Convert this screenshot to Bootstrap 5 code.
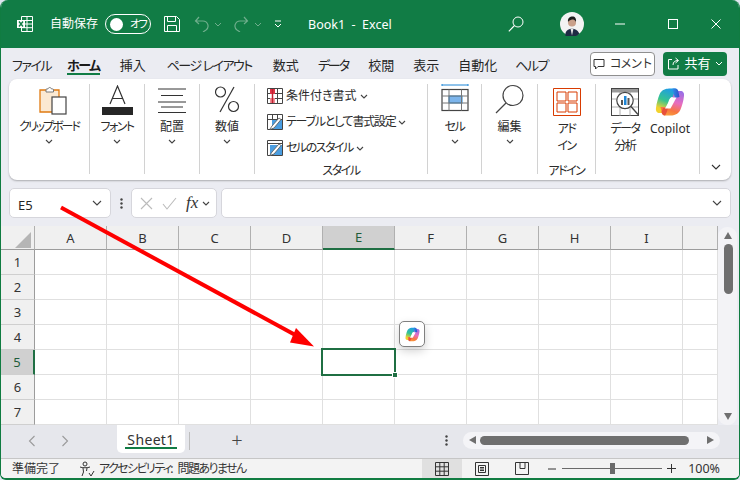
<!DOCTYPE html>
<html lang="ja">
<head>
<meta charset="utf-8">
<title>Book1 - Excel</title>
<link href="https://cdn.jsdelivr.net/npm/bootstrap@5.3.0/dist/css/bootstrap.min.css" rel="stylesheet">
<style>
html,body{margin:0;width:740px;height:480px;overflow:hidden;background:#dfe6f0}
body{font-family:"Noto Sans","Noto Sans CJK JP",sans-serif;font-size:12px;color:#262626;font-feature-settings:"palt";line-height:14px}
.kn{letter-spacing:-1.5px}
.kn2{letter-spacing:-2px}
.kn3{letter-spacing:-1.25px}
.xl-win{width:740px;height:480px;background:#ebecf2;border-radius:8px 8px 6px 6px;overflow:hidden;position:relative;border-left:1px solid #107c41;border-right:1px solid #107c41;border-bottom:2px solid #107c41}
.xl-title{height:48px;background:#117c45;color:#fff;margin:0 -1px}
.xl-title svg{display:block;flex:none}
.t-auto{width:55px}
.t-toggle{width:46px;height:20px;border:1.3px solid #fff;border-radius:10px;margin-right:13px;padding:0 3px 0 3px;font-size:11px;white-space:nowrap}
.t-knob{width:13px;height:13px;border-radius:50%;background:#fff;margin-right:7px;margin-left:1px;flex:none}
.t-name{font-size:12.5px;width:200px;flex:none;white-space:pre;padding-top:2px}
.xl-tabs{height:31px;padding-left:11px;font-size:13px}
.xl-tab{margin-right:19px;padding-top:4px;position:relative;height:25px;line-height:20px;white-space:pre;flex:none}
.xl-tab-on{font-weight:700;color:#1b1b1b}
.xl-tab-on::after{content:"";position:absolute;left:0;right:0;bottom:1px;height:2px;background:#117c45}
.gap16{margin-right:16px}
.gap18{margin-right:18px}
.gap20{margin-right:20px}
.gap21{margin-right:21px}
.btn-cmt,.btn-share{height:24px;border-radius:4px;font-size:12px;padding:0;display:flex;align-items:center;justify-content:center;flex:none;white-space:nowrap}
.btn-cmt{width:65px;background:#fff;border:1px solid #8f8f8f;color:#333;margin-right:8px}
.btn-share{width:64px;background:#117c45;border:0;color:#fff;font-size:13px;margin-right:12px}
.xl-ribbon{height:101px;margin:0 8px 8px;background:#fff;border-radius:8px;box-shadow:0 1px 2px rgba(0,0,0,.28);padding-top:5px}
.grp{height:90px;border-right:1px solid #d2d2d2;text-align:center;flex:none;color:#2b2b2b}
.grp svg{display:block;margin:0 auto}
.g-ic{height:36px;display:flow-root}
.g-lab{height:14px;line-height:14px;white-space:nowrap}
.g-two{height:34px;line-height:17px}
.grp .g-chev{margin-top:5px}
.g-foot{position:absolute;left:0;right:0;bottom:-4px;line-height:14px}
.sty-list{margin-top:-1px}
.sty-row{height:26px;padding-left:12px;white-space:nowrap}
.grp .sty-row svg{margin:0 3px 0 0}
.grp .sty-row .chv{margin:0 0 0 3px}
.col-data{width:58px}
.col-cop{width:40px;margin-left:-4px}
.xl-fbar{height:30px;margin:0 8px 8px}
.fbox{background:#fff;border:1px solid #d6d6dc;border-radius:5px;height:30px}
.e5-txt{padding-top:3px;font-size:13px}
.fx-txt{font-family:"Liberation Serif",serif;font-size:17px;font-weight:400;margin-left:9px;color:#333}
.xl-sheetwrap{height:199px;background:#fff}
.sheet{border-collapse:separate;border-spacing:0;table-layout:fixed;width:717px}
.sheet th,.sheet td{padding:0;font-weight:400;text-align:center;font-size:13px;color:#333}
.sheet thead th{height:24px;background:#f0f0f0;border-right:1px solid #b0b0b0;border-bottom:1px solid #9c9c9c}
.sheet thead th.on{background:#d0d0d0;border-bottom:2px solid #1f6f43;color:#1f5c3a}
.sheet tbody th{height:25px;background:#f0f0f0;border-right:1px solid #9c9c9c;border-bottom:1px solid #cfcfcf}
.sheet tbody th.on{background:#d0d0d0;border-right:2px solid #1f6f43;color:#1f5c3a}
.sheet td{height:25px;border-right:1px solid #e0e0e0;border-bottom:1px solid #e0e0e0;position:relative}
.sel-box{position:absolute;left:-2px;top:-2px;width:75px;height:28px;border:2px solid #1f6f43;z-index:2}
.sel-box::after{content:"";position:absolute;right:-4px;bottom:-4px;width:6px;height:6px;background:#1f6f43;border:1px solid #fff}
.vscroll{width:22px;background:#ebecf2;padding-top:1px}
.vtrack{width:19px;height:198px;background:#f3f3f6;border-radius:9px;position:relative}
.vthumb{position:absolute;left:6px;top:17px;width:9px;height:50px;background:#6f6f6f;border-radius:5px}
.tri-u,.tri-d{position:absolute;left:6px;width:0;height:0;border-left:4.5px solid transparent;border-right:4.5px solid transparent}
.tri-u{top:5px;border-bottom:7px solid #6f6f6f}
.tri-d{bottom:5px;border-top:7px solid #6f6f6f}
.xl-sbar{height:33px;background:#e6e7ec;position:relative}
.s-tab{margin-left:48px;margin-right:4px;width:68px;height:28px;background:#fff;border-radius:0 0 5px 5px;font-size:14px;text-align:center;position:relative;line-height:29px;letter-spacing:.35px;color:#333;flex:none}
.s-tab::after{content:"";position:absolute;left:8px;right:8px;bottom:4px;height:2px;background:#117c45}
.s-sep{width:1px;height:18px;background:#bdbdbd;margin-top:7px}
.s-plus{font-size:20px;margin-left:37px;margin-top:5px;line-height:20px;color:#444;width:20px;text-align:center;font-weight:300}
.hs-track{width:257px;height:17px;background:#f4f4f7;border-radius:9px;margin-right:19px;margin-top:7px;position:relative}
.hs-thumb{position:absolute;left:17px;top:4px;width:209px;height:9px;border-radius:5px;background:#6f6f6f}
.tri-l,.tri-r{position:absolute;top:4px;width:0;height:0;border-top:4.5px solid transparent;border-bottom:4.5px solid transparent}
.tri-l{left:6px;border-right:7px solid #6f6f6f}
.tri-r{right:6px;border-left:7px solid #6f6f6f}
.xl-status{height:20px;background:#f3f3f3;border-top:1px solid #c6c6c6;font-size:12px;padding-left:11px;color:#333;white-space:nowrap}
.acc-txt{letter-spacing:-1.6px;word-spacing:4px}
.v-btn{width:40px;height:19px}
.v-on{background:#e0e0e0}
.z-line{width:100px;height:1px;background:#6a6a6a;position:relative;margin:0 5px 0 6px}
.z-knob{position:absolute;left:48px;top:-5px;width:5px;height:11px;background:#6a6a6a}
.z-pct{margin:0 19px 0 12px;font-size:12.5px}
.arrow-ov{position:absolute;left:0;top:0;z-index:5;pointer-events:none}
.cp-float{position:absolute;left:398px;top:321px;width:26px;height:26px;background:#fff;border:1px solid #808080;border-radius:5px;box-shadow:0 4px 10px rgba(0,0,0,.18);z-index:4}
</style>
</head>
<body>
<svg width="0" height="0" class="position-absolute">
<defs>
<linearGradient id="cg1" x1=".6" y1="0" x2=".2" y2="1"><stop offset="0" stop-color="#1e9be8"/><stop offset=".5" stop-color="#35c490"/><stop offset=".85" stop-color="#f2d22e"/></linearGradient>
<linearGradient id="cg2" x1=".7" y1="0" x2=".4" y2="1"><stop offset="0" stop-color="#9a6fe6"/><stop offset=".45" stop-color="#e86cc0"/><stop offset=".8" stop-color="#f8763f"/><stop offset="1" stop-color="#f99a3c"/></linearGradient>
<linearGradient id="cg3" x1="0" y1="0" x2="1" y2="0"><stop offset="0" stop-color="#2f8fe8"/><stop offset="1" stop-color="#2f4fc8"/></linearGradient>
<symbol id="copilot" viewBox="0 0 30 30">
<path d="M9.500 2.500C11 1.500 13 1.500 20 1.500 22 1.500 23 3 23.500 5L24.500 10H18C16 10 15 11 14 13L12 21C11 24.500 9 26 6.500 26H4.500C2 26 .5 24 1 21 1.500 16 3 11.500 4.500 7.500 5.500 5 7 3.500 9.500 2.500z" fill="url(#cg1)"/>
<path d="M20.500 27.500C19 28.500 17 28.500 10 28.500 8 28.500 7 27 6.500 25L5.500 20H12C14 20 15 19 16 17L18 9C19 5.500 21 4 23.500 4H25.500C28 4 29.500 6 29 9 28.500 14 27 18.500 25.500 22.500 24.500 25 23 26.500 20.500 27.500z" fill="url(#cg2)"/>
<path d="M17.500 1.500h2.500C22 1.500 23 3 23.500 5L24.500 10 20 11 18 4C17.700 2.800 17.500 2 17.500 1.500z" fill="url(#cg3)"/>
<path d="M8 21h5l-1 3.500C11.500 26 11 27 10 28.500 8 28.500 7 27 6.500 25z" fill="#e8503a"/>
<path d="M16 10.500h5.500L15.500 21.500H10z" fill="#fff"/>
</symbol>
<symbol id="chev" viewBox="0 0 8 5"><path d="M1 1l3 3 3-3" fill="none" stroke="#444" stroke-width="1.100"/></symbol>
</defs>
</svg>
<div class="xl-win d-flex flex-column">
  <!-- title bar -->
  <div class="xl-title d-flex align-items-center">
    <svg class="ms-3" width="18" height="18" viewBox="0 0 18 18"><path d="M5.500 1.500h11v15h-11zM11 1.500v15M5.500 5.500h11M5.500 9h11M5.500 12.700h11" fill="none" stroke="#fff" stroke-width="1"/><rect x="1" y="5" width="8" height="8" fill="#fff"/><path d="M3 6.500l4 5M7 6.500l-4 5" stroke="#117c45" stroke-width="1.400"/></svg>
    <div class="t-auto ms-3 flex-shrink-0">自動保存</div>
    <div class="t-toggle d-flex align-items-center flex-shrink-0"><span class="t-knob"></span><span class="kn">オフ</span></div>
    <svg width="16" height="16" viewBox="0 0 16 16"><path d="M.5 .5h12l3 3v12h-15zM3.500 .5v5h8v-5M3.500 15.500v-6h9v6" fill="none" stroke="#fff"/></svg>
    <svg width="16" height="16" viewBox="0 0 16 16" style="margin-left:14px"><path d="M5 1L1.500 5 5 8M1.500 5H9a5 5 0 0 1 3 9l-3 2" fill="none" stroke="#6fae8c" stroke-width="1.200"/></svg>
    <svg class="mx-1" width="8" height="5" viewBox="0 0 8 5"><path d="M1 1l3 3 3-3" fill="none" stroke="#6fae8c"/></svg>
    <svg width="18" height="16" viewBox="0 0 16 16" style="margin-left:6px"><path d="M11 1l3.500 4L11 8M14.500 5H7a5 5 0 0 0-3 9l3 2" fill="none" stroke="#6fae8c" stroke-width="1.200"/></svg>
    <svg class="mx-1" width="8" height="5" viewBox="0 0 8 5"><path d="M1 1l3 3 3-3" fill="none" stroke="#6fae8c"/></svg>
    <svg style="margin-left:8px" width="8" height="8" viewBox="0 0 8 8"><path d="M1 1h6M1 4l3 3 3-3" fill="none" stroke="#fff" stroke-width="1"/></svg>
    <div class="t-name" style="margin-left:26px">Book1  -  Excel</div>
    <svg width="16" height="16" viewBox="0 0 16 16"><circle cx="10" cy="6" r="5" fill="none" stroke="#fff"/><path d="M6.500 9.500L.8 15.300" stroke="#fff" stroke-width="1.100"/></svg>
    <svg style="margin-left:36px" width="24" height="24" viewBox="0 0 24 24"><circle cx="12" cy="12" r="12" fill="#f3f3f3"/><path d="M5.500 24a12 12 0 0 1 0-3c1-3 3.500-4 6.500-4.500 3 .5 5.500 1.500 7 4.500v1a12 12 0 0 1-13.500 2z" fill="#1e2a44"/><path d="M10.500 16.500l1.500 7 1.500-7z" fill="#e8e8e8"/><circle cx="12" cy="10.500" r="4" fill="#c9a08a"/><path d="M8 10c-.5-4 2-5.500 4.500-5.500S16.500 6.500 16 10c-1-2-2-2.500-4-2.500-2 .5-3 1-4 2.500z" fill="#1d1d1d"/></svg>
    <div class="d-flex align-items-center" style="margin-left:31px">
      <svg width="10" height="10" viewBox="0 0 10 10"><path d="M0 5h10" stroke="#fff"/></svg>
      <svg style="margin-left:43px" width="10" height="10" viewBox="0 0 10 10"><rect x=".5" y=".5" width="9" height="9" fill="none" stroke="#fff"/></svg>
      <svg style="margin-left:33px;margin-right:20px" width="10" height="10" viewBox="0 0 10 10"><path d="M.5 .5l9 9M9.500 .5l-9 9" stroke="#fff"/></svg>
    </div>
  </div>
  <!-- tabs -->
  <div class="xl-tabs d-flex align-items-center">
    <div class="xl-tab kn gap16">ファイル</div>
    <div class="xl-tab xl-tab-on kn gap20">ホーム</div>
    <div class="xl-tab gap21">挿入</div>
    <div class="xl-tab kn gap21">ページ レイアウト</div>
    <div class="xl-tab">数式</div>
    <div class="xl-tab kn2 gap20">データ</div>
    <div class="xl-tab">校閲</div>
    <div class="xl-tab">表示</div>
    <div class="xl-tab gap18">自動化</div>
    <div class="xl-tab kn">ヘルプ</div>
    <button class="btn btn-cmt ms-auto" type="button"><svg class="me-1" width="12" height="12" viewBox="0 0 12 12"><path d="M1 1.500h10v7H5L2.500 11V8.500H1z" fill="none" stroke="#333"/></svg><span class="kn">コメント</span></button>
    <button class="btn btn-share" type="button"><svg class="me-1" width="13" height="13" viewBox="0 0 13 13"><path d="M5 2.500H1.500v9.500h9.500V8M6 8c0-3 2-4.500 5-4.500M8.500 1L11.500 3.500 8.500 6" fill="none" stroke="#fff"/></svg>共有<svg class="ms-1" width="8" height="5" viewBox="0 0 8 5"><path d="M1 1l3 3 3-3" fill="none" stroke="#fff"/></svg></button>
  </div>
  <!-- ribbon -->
  <div class="xl-ribbon d-flex position-relative">
    <div class="grp" style="width:81px">
      <div class="g-ic"><svg width="28" height="29" viewBox="0 0 28 29" style="margin-left:30px;margin-top:2px"><path d="M1 4h19v22H1z" fill="#fbe9d2" stroke="#e07a10" stroke-width="1.300"/><path d="M7 4c0-1.500 1-1 2-1 .3-2 3-2 3.500 0 1 0 2-.5 2 1v2H7z" fill="#fff" stroke="#777"/><rect x="13" y="11" width="14" height="17" fill="#fff" stroke="#444" stroke-width="1.200"/></svg></div>
      <div class="g-lab kn2">クリップボード</div>
      <svg class="g-chev" width="8" height="5"><use href="#chev"/></svg>
    </div>
    <div class="grp" style="width:55px">
      <div class="g-ic"><svg width="33" height="31" viewBox="0 0 33 31" style="margin-top:1px"><path d="M9 19L16.500 1 24 19M11.500 13.500h10" fill="none" stroke="#333" stroke-width="1.200"/><rect x="1" y="22" width="31" height="8" fill="#262626"/></svg></div>
      <div class="g-lab kn">フォント</div>
      <svg class="g-chev" width="8" height="5"><use href="#chev"/></svg>
    </div>
    <div class="grp" style="width:55px">
      <div class="g-ic"><svg width="30" height="26" viewBox="0 0 30 26" style="margin-top:4px"><path d="M1 1h28M4 7.500h22M1 14h28M4 19h22M1 24.500h28" stroke="#333" stroke-width="1"/></svg></div>
      <div class="g-lab">配置</div>
      <svg class="g-chev" width="8" height="5"><use href="#chev"/></svg>
    </div>
    <div class="grp" style="width:55px">
      <div class="g-ic"><svg width="26" height="27" viewBox="0 0 26 27" style="margin-top:2px"><circle cx="6.500" cy="6" r="5" fill="none" stroke="#333" stroke-width="1.200"/><circle cx="19.500" cy="20.500" r="5" fill="none" stroke="#333" stroke-width="1.200"/><path d="M20 1L6 26" stroke="#333" stroke-width="1.200"/></svg></div>
      <div class="g-lab">数値</div>
      <svg class="g-chev" width="8" height="5"><use href="#chev"/></svg>
    </div>
    <div class="grp position-relative text-start" style="width:173px">
      <div class="sty-list">
      <div class="sty-row d-flex align-items-center">
        <svg width="16" height="16" viewBox="0 0 16 16"><path d="M.5 .5h15v15H.5zM5.500 .5v15M10.500 .5v15M.5 5.500h15M.5 10.500h15" fill="none" stroke="#444"/><rect x="3" y="1" width="5" height="5" fill="#e0344a"/><rect x="3" y="10" width="5" height="5" fill="#f08a94"/><path d="M5.500 1v14" stroke="#c0202f" stroke-width="1.500"/></svg>条件付き書式<svg class="chv" width="8" height="5"><use href="#chev"/></svg>
      </div>
      <div class="sty-row d-flex align-items-center">
        <svg width="16" height="16" viewBox="0 0 16 16"><path d="M.5 .5h15v15H.5zM5.500 .5v6M10.500 .5v6M.5 5.500h15" fill="none" stroke="#444"/><rect x="5" y="6" width="10" height="9" fill="#4a9de0"/><path d="M3 15l2-3 7-8 2 1.500-7 8.500-4 1.500z" fill="#fff" stroke="#555" stroke-width=".8"/></svg><span class="kn3">テーブルとして書式設定</span><svg class="chv" width="8" height="5"><use href="#chev"/></svg>
      </div>
      <div class="sty-row d-flex align-items-center">
        <svg width="16" height="16" viewBox="0 0 16 16"><path d="M.5 .5h15v15H.5zM.5 3.500h15" fill="none" stroke="#444"/><rect x="3" y="5" width="12" height="10" fill="#4a9de0"/><path d="M3 15l2-3 7-8 2 1.500-7 8.500-4 1.500z" fill="#fff" stroke="#555" stroke-width=".8"/></svg><span class="kn">セルのスタイル</span><svg class="chv" width="8" height="5"><use href="#chev"/></svg>
      </div>
      </div>
      <div class="g-foot text-center kn">スタイル</div>
    </div>
    <div class="grp" style="width:54px">
      <div class="g-ic"><svg width="28" height="28" viewBox="0 0 28 28"><path d="M1 1h26M1 0v2M27 0v2" stroke="#1f86d6" fill="none"/><rect x="1" y="5.500" width="26" height="21" fill="#fff" stroke="#444" stroke-width="1.200"/><rect x="8" y="12" width="13" height="7" fill="#7cb5ec" stroke="#1f86d6"/><path d="M1 12h26M1 19h26M8 5.500v21M20.500 5.500v21" stroke="#777" fill="none"/></svg></div>
      <div class="g-lab kn">セル</div>
      <svg class="g-chev" width="8" height="5"><use href="#chev"/></svg>
    </div>
    <div class="grp" style="width:56px">
      <div class="g-ic"><svg width="30" height="30" viewBox="0 0 30 30"><circle cx="18" cy="11.500" r="10" fill="none" stroke="#444" stroke-width="1.200"/><path d="M11 19L1 29" stroke="#444" stroke-width="1.200"/></svg></div>
      <div class="g-lab">編集</div>
      <svg class="g-chev" width="8" height="5"><use href="#chev"/></svg>
    </div>
    <div class="grp position-relative" style="width:58px">
      <div class="g-ic"><svg width="28" height="28" viewBox="0 0 28 28" style="margin-top:4px"><path d="M.5 .5h27v27H.5z" fill="none" stroke="#d83b01"/><path d="M4 4h9v9H4zM15 4h9v9h-9zM4 15h9v9H4zM15 15h9v9h-9z" fill="none" stroke="#d83b01"/></svg></div>
      <div class="g-two kn">アド<br>イン</div>
      <div class="g-foot kn">アドイン</div>
    </div>
    <div class="grp d-flex" style="width:104px">
      <div class="col-data">
        <div class="g-ic"><svg width="28" height="28" viewBox="0 0 28 28" style="margin-top:4px"><rect x=".5" y=".5" width="27" height="27" fill="#fff" stroke="#444"/><rect x="1" y="1" width="26" height="3.500" fill="#9a9a9a"/><path d="M1 11h26M1 19h26M9 4v24M19 4v24" stroke="#999" fill="none" stroke-width=".8"/><circle cx="14" cy="12.500" r="8.200" fill="#fff" stroke="#444" stroke-width="1.200"/><rect x="10" y="12" width="2" height="5" fill="#555"/><rect x="13" y="8" width="2.500" height="9" fill="#1f86d6"/><rect x="16.500" y="10" width="2" height="7" fill="#555"/><path d="M20 18.500l7 8" stroke="#444" stroke-width="1.400"/></svg></div>
        <div class="g-two kn">データ<br>分析</div>
      </div>
      <div class="col-cop">
        <div class="g-ic"><svg width="30" height="30" style="margin-top:3px;margin-left:5px"><use href="#copilot"/></svg></div>
        <div class="g-two">Copilot</div>
      </div>
    </div>
    <svg class="position-absolute" style="right:10px;bottom:10px" width="10" height="6" viewBox="0 0 10 6"><path d="M1 1l4 4 4-4" fill="none" stroke="#333" stroke-width="1.100"/></svg>
  </div>
  <!-- formula bar -->
  <div class="xl-fbar d-flex">
    <div class="fbox d-flex align-items-center justify-content-between flex-shrink-0 px-2" style="width:102px"><span class="e5-txt">E5</span><svg width="10" height="6" viewBox="0 0 10 6"><path d="M1 1l4 4 4-4" fill="none" stroke="#444" stroke-width="1.100"/></svg></div>
    <svg class="align-self-center" style="margin:0 8px 0 9px" width="3" height="11" viewBox="0 0 3 11"><circle cx="1.500" cy="1.500" r="1.200" fill="#444"/><circle cx="1.500" cy="5.500" r="1.200" fill="#444"/><circle cx="1.500" cy="9.500" r="1.200" fill="#444"/></svg>
    <div class="fbox d-flex align-items-center flex-shrink-0 px-1" style="width:86px">
      <svg class="ms-1" width="13" height="13" viewBox="0 0 13 13"><path d="M1 1l11 11M12 1L1 12" stroke="#bbb" stroke-width="1.100"/></svg>
      <svg style="margin-left:9px" width="15" height="13" viewBox="0 0 15 13"><path d="M1 7l4 5L14 1" fill="none" stroke="#bbb" stroke-width="1.100"/></svg>
      <i class="fx-txt">fx</i>
      <svg class="ms-1" width="8" height="5"><use href="#chev"/></svg>
    </div>
    <div class="fbox flex-grow-1 d-flex align-items-center justify-content-end px-2 ms-1"><svg width="10" height="6" viewBox="0 0 10 6"><path d="M1 1l4 4 4-4" fill="none" stroke="#444" stroke-width="1.100"/></svg></div>
  </div>
  <!-- sheet -->
  <div class="xl-sheetwrap d-flex overflow-hidden">
    <table class="sheet">
      <colgroup><col style="width:34px"><col style="width:72px"><col style="width:72px"><col style="width:72px"><col style="width:72px"><col style="width:72px"><col style="width:72px"><col style="width:72px"><col style="width:72px"><col style="width:72px"><col style="width:35px"></colgroup>
      <thead><tr><th><svg class="d-block ms-auto" style="margin-right:3px;margin-top:4px" width="16" height="16" viewBox="0 0 16 16"><path d="M16 0v16H0z" fill="#b5b5b5"/></svg></th><th>A</th><th>B</th><th>C</th><th>D</th><th class="on">E</th><th>F</th><th>G</th><th>H</th><th>I</th><th></th></tr></thead>
      <tbody>
        <tr><th>1</th><td></td><td></td><td></td><td></td><td></td><td></td><td></td><td></td><td></td><td></td></tr>
        <tr><th>2</th><td></td><td></td><td></td><td></td><td></td><td></td><td></td><td></td><td></td><td></td></tr>
        <tr><th>3</th><td></td><td></td><td></td><td></td><td></td><td></td><td></td><td></td><td></td><td></td></tr>
        <tr><th>4</th><td></td><td></td><td></td><td></td><td></td><td></td><td></td><td></td><td></td><td></td></tr>
        <tr><th class="on">5</th><td></td><td></td><td></td><td></td><td><div class="sel-box"></div></td><td></td><td></td><td></td><td></td><td></td></tr>
        <tr><th>6</th><td></td><td></td><td></td><td></td><td></td><td></td><td></td><td></td><td></td><td></td></tr>
        <tr><th>7</th><td></td><td></td><td></td><td></td><td></td><td></td><td></td><td></td><td></td><td></td></tr>
      </tbody>
    </table>
    <div class="vscroll flex-shrink-0"><div class="vtrack"><span class="tri-u"></span><span class="vthumb"></span><span class="tri-d"></span></div></div>
  </div>
  <!-- sheet tabs -->
  <div class="xl-sbar d-flex align-items-start">
    <svg style="margin:10px 0 0 27px" width="8" height="12" viewBox="0 0 8 12"><path d="M6.500 1L1.500 6l5 5" fill="none" stroke="#9a9a9a" stroke-width="1.100"/></svg>
    <svg style="margin:10px 0 0 25px" width="8" height="12" viewBox="0 0 8 12"><path d="M1.500 1l5 5-5 5" fill="none" stroke="#9a9a9a" stroke-width="1.100"/></svg>
    <div class="s-tab">Sheet1</div>
    <div class="s-sep"></div>
    <div class="s-plus">+</div>
    <svg class="ms-auto" style="margin:10px 15px 0 0" width="3" height="11" viewBox="0 0 3 11"><circle cx="1.500" cy="1.500" r="1.200" fill="#444"/><circle cx="1.500" cy="5.500" r="1.200" fill="#444"/><circle cx="1.500" cy="9.500" r="1.200" fill="#444"/></svg>
    <div class="hs-track"><span class="tri-l"></span><span class="hs-thumb"></span><span class="tri-r"></span></div>
  </div>
  <!-- status -->
  <div class="xl-status d-flex align-items-center">
    <span>準備完了</span>
    <svg class="me-1 flex-shrink-0" style="margin-left:19px" width="16" height="16" viewBox="0 0 16 16"><circle cx="6" cy="3" r="2" fill="none" stroke="#333"/><path d="M1 6c2 1 8 1 10 0M4 7l.5 4L3 15M8 7l-.5 3M10 12l2 3 3-5" fill="none" stroke="#333"/></svg>
    <span class="acc-txt">アクセシビリティ: 問題ありません</span>
    <div class="ms-auto d-flex align-items-center">
      <div class="v-btn v-on d-flex align-items-center justify-content-center"><svg width="14" height="14" viewBox="0 0 14 14"><path d="M.5 .5h13v13H.5zM4.800 .5v13M9.200 .5v13M.5 4.800h13M.5 9.200h13" fill="none" stroke="#333"/></svg></div>
      <div class="v-btn d-flex align-items-center justify-content-center"><svg width="14" height="14" viewBox="0 0 14 14"><path d="M.5 .5h13v13H.5zM3.500 3.500h7v7h-7zM5 5.500h4M5 7h4M5 8.500h4" fill="none" stroke="#333"/></svg></div>
      <div class="v-btn d-flex align-items-center justify-content-center"><svg width="14" height="13" viewBox="0 0 14 13"><path d="M.5 .5h13v12H.5zM5 .5v6h5v-6" fill="none" stroke="#333"/></svg></div>
      <svg style="margin-left:6px" width="8" height="2" viewBox="0 0 8 2"><path d="M0 1h8" stroke="#333"/></svg>
      <div class="z-line"><span class="z-knob"></span></div>
      <svg width="9" height="9" viewBox="0 0 9 9"><path d="M0 4.500h9M4.500 0v9" stroke="#333"/></svg>
      <span class="z-pct">100%</span>
    </div>
  </div>
  <!-- overlays -->
  <svg class="arrow-ov" width="740" height="480" viewBox="0 0 740 480"><path d="M60 207.500L298 337" stroke="#fe0000" stroke-width="4"/><path d="M313 346.500L289 342.500 295 328z" fill="#fe0000"/></svg>
  <div class="cp-float d-flex align-items-center justify-content-center"><svg width="15" height="15"><use href="#copilot"/></svg></div>
</div>
<script src="https://cdn.jsdelivr.net/npm/bootstrap@5.3.0/dist/js/bootstrap.bundle.min.js"></script>
</body>
</html>
